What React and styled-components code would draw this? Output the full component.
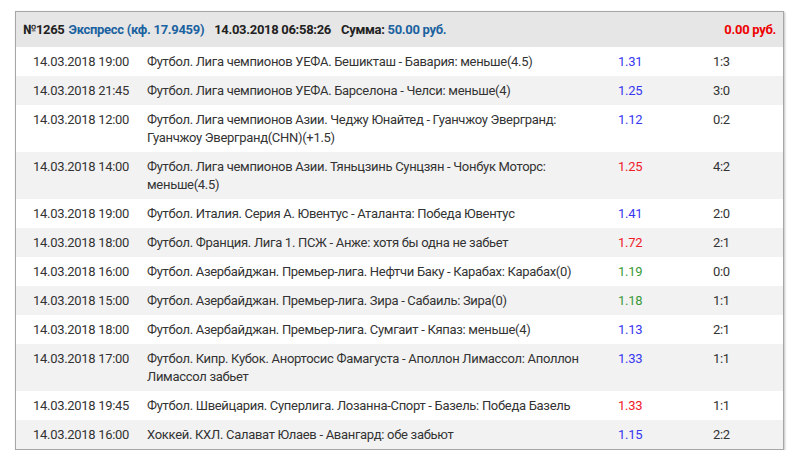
import React from 'react';
import styled, { createGlobalStyle } from 'styled-components';

const Global = createGlobalStyle`
body{
  margin:0;
  background:#fff;
  font-family:Roboto,"Liberation Sans",sans-serif;
  font-size:13px;
  letter-spacing:-0.3px;
  color:#333;
}
`
const Wrap = styled.div`
padding:11px 15px 0 15px;
`
const Card = styled.div`
border:1px solid #a6a6a6;
box-shadow:1px 1px 2px rgba(0,0,0,0.25);
background:#fff;
`
const Head = styled.div`
display:flex;
justify-content:space-between;
align-items:center;
height:35px;
padding:0 7px;
background:#e6e6e6;
font-weight:bold;
color:#222;
`
const HeadLeft = styled.div`
display:flex;
`
const Blue = styled.span`
color:#1b62a0;
`
const Gap = styled.span`
margin-left:${props=>props.w||0}px;
`
const Red = styled.span`
color:#ee0000;
`
const Row = styled.div`
display:grid;
grid-template-columns:114px 471px 95px 1fr;
padding:5.5px 0 5.5px 17px;
line-height:18px;
background:${props=>props.Odd?"#f2f2f2":"#fff"};
`
const Text = styled.div`
padding-right:10px;
`
const Odds = styled.div`
color:${props=>props.c==="r"?"#f0202a":props.c==="g"?"#3a9a3a":"#3737f0"};
`

const rows = [
  ["14.03.2018 19:00","Футбол. Лига чемпионов УЕФА. Бешикташ - Бавария: меньше(4.5)","1.31","b","1:3"],
  ["14.03.2018 21:45","Футбол. Лига чемпионов УЕФА. Барселона - Челси: меньше(4)","1.25","b","3:0"],
  ["14.03.2018 12:00","Футбол. Лига чемпионов Азии. Чеджу Юнайтед - Гуанчжоу Эвергранд: Гуанчжоу Эвергранд(CHN)(+1.5)","1.12","b","0:2"],
  ["14.03.2018 14:00","Футбол. Лига чемпионов Азии. Тяньцзинь Сунцзян - Чонбук Моторс: меньше(4.5)","1.25","r","4:2"],
  ["14.03.2018 19:00","Футбол. Италия. Серия А. Ювентус - Аталанта: Победа Ювентус","1.41","b","2:0"],
  ["14.03.2018 18:00","Футбол. Франция. Лига 1. ПСЖ - Анже: хотя бы одна не забьет","1.72","r","2:1"],
  ["14.03.2018 16:00","Футбол. Азербайджан. Премьер-лига. Нефтчи Баку - Карабах: Карабах(0)","1.19","g","0:0"],
  ["14.03.2018 15:00","Футбол. Азербайджан. Премьер-лига. Зира - Сабаиль: Зира(0)","1.18","g","1:1"],
  ["14.03.2018 18:00","Футбол. Азербайджан. Премьер-лига. Сумгаит - Кяпаз: меньше(4)","1.13","b","2:1"],
  ["14.03.2018 17:00","Футбол. Кипр. Кубок. Анортосис Фамагуста - Аполлон Лимассол: Аполлон Лимассол забьет","1.33","b","1:1"],
  ["14.03.2018 19:45","Футбол. Швейцария. Суперлига. Лозанна-Спорт - Базель: Победа Базель","1.33","r","1:1"],
  ["14.03.2018 16:00","Хоккей. КХЛ. Салават Юлаев - Авангард: обе забьют","1.15","b","2:2"],
];

const App = () => {
  return (
    <Wrap>
      <Global/>
      <Card>
        <Head>
          <HeadLeft>
            <span>№1265</span>
            <Gap w={4}><Blue>Экспресс (кф. 17.9459)</Blue></Gap>
            <Gap w={10}>14.03.2018 06:58:26</Gap>
            <Gap w={10}>Сумма: <Blue>50.00 руб.</Blue></Gap>
          </HeadLeft>
          <Red>0.00 руб.</Red>
        </Head>
        {rows.map((r,i)=><Row key={i} Odd={i%2===1}>
          <div>{r[0]}</div>
          <Text>{r[1]}</Text>
          <Odds c={r[3]}>{r[2]}</Odds>
          <div>{r[4]}</div>
        </Row>)}
      </Card>
    </Wrap>
  )
}

export default App
